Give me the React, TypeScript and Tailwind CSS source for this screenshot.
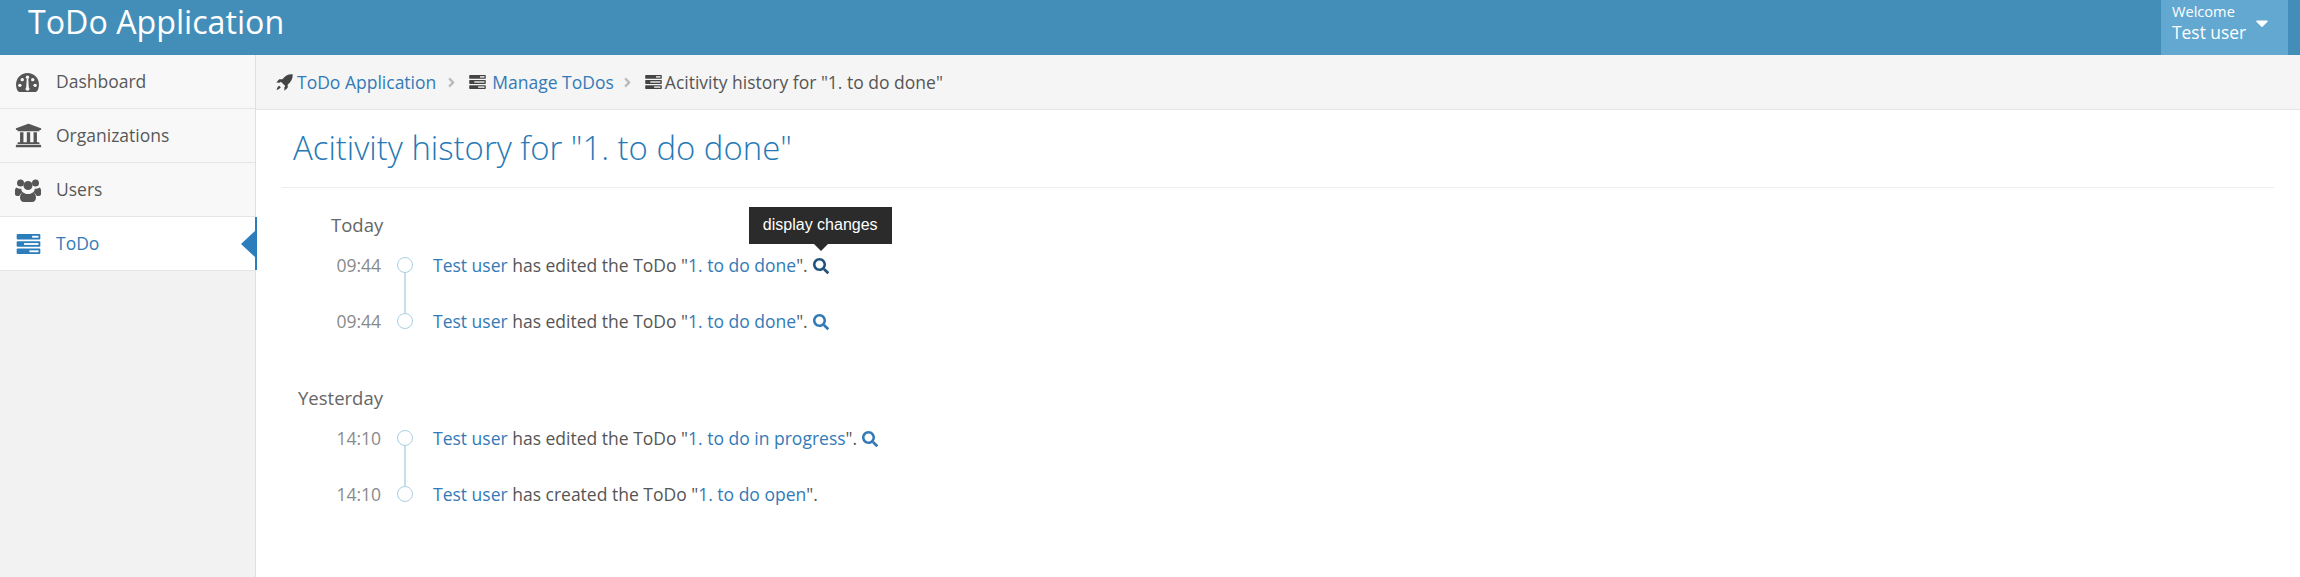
import { FaUniversity, FaSearch, FaAngleRight, FaCaretDown } from 'react-icons/fa'

function TasksIcon({ className }: { className?: string }) {
  return (
    <svg viewBox="0 0 26 22" className={className} fill="currentColor">
      <rect x="0" y="0" width="26" height="6" rx="1" />
      <rect x="0" y="8" width="26" height="6" rx="1" />
      <rect x="0" y="16" width="26" height="6" rx="1" />
      <rect x="17" y="2" width="7" height="2" fill="#fff" />
      <rect x="8" y="10" width="16" height="2" fill="#fff" />
      <rect x="14" y="18" width="10" height="2" fill="#fff" />
    </svg>
  )
}

function GaugeIcon({ className }: { className?: string }) {
  return (
    <svg viewBox="0 0 26 22" className={className} fill="currentColor">
      <path d="M13 1C6 1 1 6.500 1 13c0 3 .8 5.500 2.500 7.500.5.500 1 .5 1.500.5h16c.5 0 1 0 1.500-.5C24.200 18.500 25 16 25 13 25 6.500 20 1 13 1z" />
      <g fill="#f8f8f8">
        <circle cx="5" cy="14" r="1.800" />
        <circle cx="7.500" cy="8" r="1.800" />
        <circle cx="21" cy="14" r="1.800" />
        <circle cx="18.500" cy="8" r="1.800" />
        <circle cx="13" cy="5.500" r="1.800" />
        <path d="M12.200 7h1.600l.6 9.200c.7.700.9 1.800.3 2.700-.6 1-2.500 1-3.400 0-.6-.9-.4-2 .3-2.700z" />
      </g>
    </svg>
  )
}

function PeopleIcon({ className }: { className?: string }) {
  return (
    <svg viewBox="0 0 26 24" className={className} fill="currentColor">
      <circle cx="5.500" cy="5" r="3.500" />
      <circle cx="20.500" cy="5" r="3.500" />
      <circle cx="13" cy="7.500" r="4.500" />
      <path d="M1.500 9.500c1 .8 2.300 1.200 3.700 1.200h1c.2 1.600.9 3 2 4C6.200 15.300 4.700 16.300 4.200 18H2c-1 0-2-.8-2-2v-3.500c0-1.200.5-2.300 1.500-3zM24.500 9.500c-1 .8-2.300 1.200-3.700 1.200h-1c-.2 1.600-.9 3-2 4 2 .6 3.500 1.600 4 3.300H24c1 0 2-.8 2-2v-3.500c0-1.200-.5-2.300-1.500-3z" />
      <path d="M8.500 14.500c1.300 1 2.800 1.500 4.500 1.500s3.200-.5 4.500-1.500c2.500.5 3.500 2.500 3.500 5 0 2.500-1.500 4.500-4 4.500H9c-2.500 0-4-2-4-4.500 0-2.500 1-4.500 3.500-5z" />
    </svg>
  )
}

function RocketIcon({ className }: { className?: string }) {
  return (
    <svg viewBox="0 0 16 16" className={className} fill="currentColor">
      <path d="M15.700.3c-4.200-.3-7.200 1.500-9.700 4.700H3L.3 8l3.100.2 1.200-.9 4.100 4.100-.9 1.200.2 3.100 3-2.700v-3c3.200-2.500 5-5.500 4.700-9.700z" />
      <path d="M3 11c-1 .5-2 2-2.500 4 2-.5 3.500-1.500 4-2.500z" />
    </svg>
  )
}

const navItems = [
  { label: 'Dashboard', icon: <GaugeIcon className="w-[25px] h-[21px] mt-[2px]" /> },
  { label: 'Organizations', icon: <FaUniversity className="w-[27px] h-[27px]" /> },
  { label: 'Users', icon: <PeopleIcon className="w-[26px] h-[24px]" /> },
]

interface Entry {
  time: string
  verb: string
  todo: string
  search?: boolean
  dark?: boolean
}

const groups: { label: string; indent: string; entries: Entry[] }[] = [
  {
    label: 'Today',
    indent: 'pl-[49px]',
    entries: [
      { time: '09:44', verb: 'edited', todo: '1. to do done', search: true, dark: true },
      { time: '09:44', verb: 'edited', todo: '1. to do done', search: true },
    ],
  },
  {
    label: 'Yesterday',
    indent: 'pl-[16px]',
    entries: [
      { time: '14:10', verb: 'edited', todo: '1. to do in progress', search: true },
      { time: '14:10', verb: 'created', todo: '1. to do open' },
    ],
  },
]

function TimelineRow({ entry, last }: { entry: Entry; last: boolean }) {
  return (
    <div className="flex h-[56px]">
      <div className="w-[115px] pr-[16px] text-right text-[17.5px] leading-[28px] text-[#8a8a8a]">{entry.time}</div>
      <div className="w-[16px] flex flex-col items-center pt-[6px]">
        <div className="w-[16px] h-[16px] shrink-0 rounded-full border border-[#a9cfe3] bg-white" />
        {!last && <div className="w-[2px] h-[40px] shrink-0 bg-[#c9dde8]" />}
      </div>
      <div className="pl-[20px] text-[17.5px] leading-[28px] text-[#555]">
        <a className="text-[#337ab7]">Test user</a> has {entry.verb} the ToDo "<a className="text-[#337ab7]">{entry.todo}</a>".
        {entry.search && (
          <span className="relative inline-block ml-[5px] align-[-2px]">
            <FaSearch className={`w-[16px] h-[16px] ${entry.dark ? 'text-[#23527c]' : 'text-[#337ab7]'}`} />
            {entry.dark && (
              <span className="absolute left-[-64px] bottom-[30px] w-[143px] h-[37px] bg-[#2b2b2b] text-white text-[16px] leading-[35px] text-center font-['Liberation_Sans',sans-serif]">
                display changes
                <span className="absolute left-[65px] top-[37px] border-x-[7px] border-x-transparent border-t-[7px] border-t-[#2b2b2b]" />
              </span>
            )}
          </span>
        )}
      </div>
    </div>
  )
}

export default function App() {
  return (
    <div className="w-[2300px] h-[577px] bg-white flex flex-col overflow-hidden font-['Open_Sans',sans-serif]">
      {/* Top bar */}
      <header className="h-[55px] shrink-0 bg-[#438eb9] flex justify-between items-stretch">
        <div className="pl-[28px] text-[32.2px] leading-[44px] text-white">ToDo Application</div>
        <div className="w-[127px] mr-[12px] bg-[#62a8d1] flex text-white pl-[11px]">
          <div className="pt-[2px] whitespace-nowrap">
            <div className="text-[14.6px] leading-[18px]">Welcome</div>
            <div className="text-[17.4px] leading-[24px]">Test user</div>
          </div>
          <FaCaretDown className="w-[20px] h-[20px] ml-[6px] mt-[13px] shrink-0" />
        </div>
      </header>

      <div className="flex flex-1 min-h-0">
        {/* Sidebar */}
        <aside className="w-[256px] shrink-0 bg-[#f2f2f2] border-r border-[#e0e0e0]">
          {navItems.map((item) => (
            <div key={item.label} className="h-[54px] bg-[#f8f8f8] border-b border-[#e5e5e5] flex items-center text-[#585858] text-[17.5px]">
              <div className="w-[56px] pl-[15px] shrink-0 flex text-[#555]">{item.icon}</div>
              {item.label}
            </div>
          ))}
          <div className="h-[54px] w-[256px] bg-white border-b border-[#e5e5e5] flex items-center text-[#337ab7] text-[17.5px] relative">
            <div className="w-[56px] pl-[16px] shrink-0 flex text-[#2b7dbc]">
              <TasksIcon className="w-[25px] h-[20px]" />
            </div>
            ToDo
            <span className="absolute right-[-1px] top-0 bottom-0 w-[2px] bg-[#2b7dbc]" />
            <span className="absolute right-0 top-[13px] border-y-[14px] border-y-transparent border-r-[15px] border-r-[#2b7dbc]" />
          </div>
        </aside>

        <main className="flex-1 min-w-0">
          {/* Breadcrumb */}
          <div className="h-[55px] bg-[#f5f5f5] border-b border-[#e5e5e5] flex items-center pl-[20px] text-[17.5px] text-[#555]">
            <RocketIcon className="w-[17px] h-[17px] mr-[4px] text-[#444]" />
            <a className="text-[#337ab7]">ToDo Application</a>
            <FaAngleRight className="w-[15px] h-[15px] mx-[8px] text-[#bbb]" />
            <TasksIcon className="w-[17px] h-[14px] mx-[2px] mr-[6px] text-[#444]" />
            <a className="text-[#337ab7]">Manage ToDos</a>
            <FaAngleRight className="w-[15px] h-[15px] mx-[6px] text-[#bbb]" />
            <TasksIcon className="w-[17px] h-[14px] ml-[4px] mr-[3px] text-[#444]" />
            <span>Acitivity history for "1. to do done"</span>
          </div>

          {/* Page title */}
          <div className="mx-[26px] h-[78px] border-b border-[#eeeeee] pl-[11px] pt-[15px]">
            <h1 className="text-[32.9px] leading-[46px] font-light text-[#2679b5]">Acitivity history for "1. to do done"</h1>
          </div>

          {/* Timeline */}
          <div className="pl-[26px] pt-[25px]">
            {groups.map((group) => (
              <div key={group.label} className="mb-[23px]">
                <div className={`${group.indent} text-[18.5px] leading-[24px] text-[#666] mb-[14px]`}>{group.label}</div>
                {group.entries.map((entry, i) => (
                  <TimelineRow key={i} entry={entry} last={i === group.entries.length - 1} />
                ))}
              </div>
            ))}
          </div>
        </main>
      </div>
    </div>
  )
}
